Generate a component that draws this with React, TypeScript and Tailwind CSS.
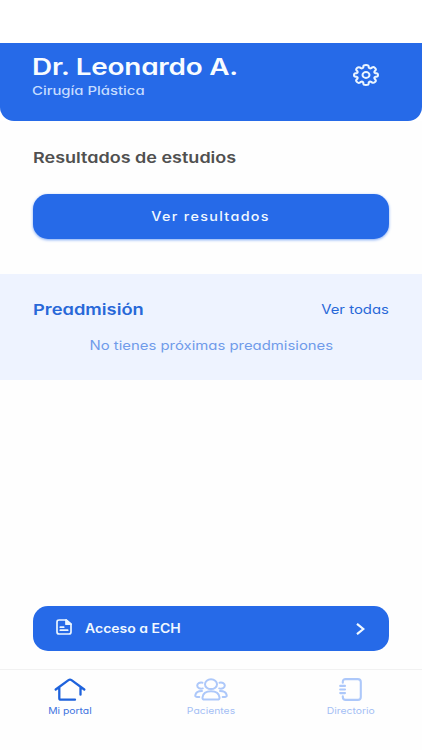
import type { ReactNode } from "react";

function GearIcon() {
    return <svg width="26" height="22" viewBox="0 0 26 22" fill="none" stroke="#eaf5ff" strokeWidth="2" strokeLinejoin="round">
        <path d="M10.300 3.600V2.600Q10.300 1.100 13 1.100T15.700 2.600V3.600Q16.800 4.800 18.300 4.100L19.200 3.400Q20.500 2.600 22 3.900T22.400 6.500L21.600 7.300Q20.800 8.600 22.200 9.200H23.300Q25 9.300 25 11T23.300 12.800H22.200Q20.800 13.400 21.600 14.700L22.400 15.500Q23.400 16.900 22 18.100T19.200 18.600L18.300 17.900Q16.800 17.200 15.700 18.400V19.400Q15.700 20.900 13 20.900T10.300 19.400V18.400Q9.200 17.200 7.700 17.900L6.800 18.600Q5.500 19.400 4 18.100T3.600 15.500L4.400 14.700Q5.200 13.400 3.800 12.800H2.700Q1 12.700 1 11T2.700 9.200H3.800Q5.200 8.600 4.400 7.300L3.600 6.500Q2.600 5.100 4 3.900T6.800 3.400L7.700 4.100Q9.200 4.800 10.300 3.600Z" />
        <ellipse cx="13" cy="11" rx="3.500" ry="2.900" />
    </svg>
}

function DocumentIcon() {
    return <svg width="16" height="16" viewBox="0 0 16 16" fill="none" stroke="#eaf5ff" strokeWidth="1.700" strokeLinecap="round" strokeLinejoin="round">
        <path d="M10 1H3.200Q1 1 1 3v10q0 2 2.200 2h9.600q2.200 0 2.200-2V5.200Z" />
        <path d="M10 1v4.200h5Z" fill="#eaf5ff" />
        <path d="M4.300 8.200h3.400M4.300 11.200h7.400" />
    </svg>
}

function ChevronIcon() {
    return <svg width="9" height="12" viewBox="0 0 9 12" fill="none" stroke="#f0f8ff" strokeWidth="2.200">
        <path d="M1 .8 7.300 6 1 11.200" />
    </svg>
}

function HomeIcon() {
    return <svg width="32" height="24" viewBox="0 0 32 24" fill="none" stroke="#1e62dc" strokeWidth="2.300" strokeLinecap="round" strokeLinejoin="round">
        <path d="M1.700 11.500 14.500 2.100q1.500-1 3 0L30.300 11.500M5.300 9.500V20.200q0 1.500 1.600 1.500H21M26.500 9.500V16.700" />
    </svg>
}

function PatientsIcon() {
    return <svg width="34" height="24" viewBox="0 0 34 24" fill="none" stroke="#adc8fa" strokeWidth="2" strokeLinecap="round" strokeLinejoin="round">
        <ellipse cx="17" cy="6.200" rx="6" ry="4.900" />
        <path d="M10.500 21.500c-1.500 0-2.200-.7-2-2.200.5-4 3-6 8.500-6s8 2 8.500 6c.2 1.500-.5 2.200-2 2.200Z" />
        <path d="M8.500 4.700C5.500 4.100 3.200 5.500 3.200 7.600s2.600 3.700 5.600 2.800M25.500 4.700C28.500 4.100 30.800 5.500 30.800 7.600s-2.600 3.700-5.600 2.800M8 13C4 13 1.800 14.400 1.300 17.200c-.2 1.100.3 1.700 1.500 1.700H5.300M26 13c4 0 6.200 1.400 6.700 4.200.2 1.100-.3 1.700-1.500 1.700H28.700" />
    </svg>
}

function DirectoryIcon() {
    return <svg width="24" height="24" viewBox="0 0 24 24" fill="none" stroke="#adc8fa" strokeWidth="2.100" strokeLinecap="round">
        <path d="M3.800 4.800V4q0-2.900 3-2.900h12q3 0 3 2.900v15q0 2.900-3 2.900h-12q-3 0-3-2.900v-.8" />
        <path d="M1.200 7.900H6M1.200 11.500H6M1.200 15.100H6" />
    </svg>
}

function NavItem({ icon, label, color }: { icon: ReactNode, label: string, color: string }) {
    return <div className={`flex w-20 flex-col items-center ${color}`}>
        <div className="h-6">{icon}</div>
        <span className="mt-[3px] scale-x-[1.150] text-[9px] leading-3">{label}</span>
    </div>
}

export default function App() {
    return <div className="flex h-[750px] w-[422px] flex-col overflow-hidden bg-white pt-[42.5px] font-['Inter','Liberation_Sans',sans-serif] whitespace-nowrap [font-feature-settings:'cv11']">
        <header className="flex h-[78px] shrink-0 justify-between rounded-b-[14px] bg-[#266ae8] pr-[43px] pl-8">
            <div className="pt-[9px]">
                <h1 className="w-fit origin-left scale-x-[1.240] text-[22.500px] leading-[30px] font-semibold tracking-[-0.200px] text-[#f8fcff]">Dr. Leonardo A.</h1>
                <p className="mt-px w-fit origin-left scale-x-[1.240] text-[12px] leading-4 font-medium text-[#c5dcff]">Cirugía Plástica</p>
            </div>
            <div className="pt-[21.500px]"><GearIcon /></div>
        </header>

        <main className="flex min-h-0 flex-1 flex-col bg-[#fefefe]">
            <section className="h-[153.5px] shrink-0 px-[33px] pt-[27px]">
                <h2 className="w-fit origin-left scale-x-[1.200] text-[15px] leading-5 font-semibold text-[#505050]">Resultados de estudios</h2>
                <button className="mt-[26.5px] flex h-[44.5px] w-full items-center justify-center rounded-[15px] bg-[#266ae8] pt-0.5 shadow-[0_1px_3px_#7ba6f5]">
                    <span className="scale-x-[1.150] text-[12.500px] font-medium tracking-[1.150px] text-[#f0f8ff]">Ver resultados</span>
                </button>
            </section>

            <section className="h-[106px] shrink-0 bg-[#eef3ff] px-[33px] pt-[26px]">
                <div className="flex h-5 items-center justify-between">
                    <h2 className="origin-left scale-x-[1.220] text-[15px] font-semibold text-[#2868d8]">Preadmisión</h2>
                    <a className="origin-right scale-x-[1.190] text-[12.500px] text-[#2868d8]">Ver todas</a>
                </div>
                <div className="mt-4 flex h-5 items-center justify-center">
                    <p className="scale-x-[1.190] text-[12.500px] text-[#709bea]">No tienes próximas preadmisiones</p>
                </div>
            </section>

            <div className="mt-auto px-[33px] pb-[18px]">
                <button className="flex h-[45px] w-full items-center rounded-[15px] bg-[#266ae8] pr-6 pl-[23px]">
                    <span className="-mt-1"><DocumentIcon /></span>
                    <span className="ml-[13px] origin-left scale-x-[1.120] pt-px text-[12.500px] font-semibold text-[#f0f8ff]">Acceso a ECH</span>
                    <span className="ml-auto"><ChevronIcon /></span>
                </button>
            </div>
        </main>

        <nav className="flex h-[81px] shrink-0 justify-between border-t border-[#f1f1f1] bg-[#fefefe] pr-[31px] pl-[30px] pt-[7.500px]">
            <NavItem icon={<HomeIcon />} label="Mi portal" color="text-[#3f73de]" />
            <NavItem icon={<PatientsIcon />} label="Pacientes" color="text-[#a4bff5]" />
            <NavItem icon={<DirectoryIcon />} label="Directorio" color="text-[#a4bff5]" />
        </nav>
    </div>
}
